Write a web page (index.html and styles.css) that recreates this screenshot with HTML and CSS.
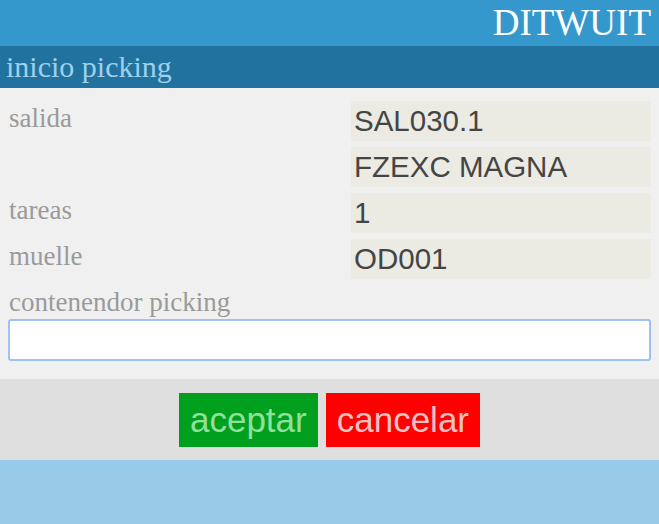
FILE: index.html
```html
<!DOCTYPE html>
<html lang="es">
<head>
<meta charset="utf-8">
<title>DITWUIT - inicio picking</title>
<link rel="stylesheet" href="styles.css">
</head>
<body>
<header class="topbar">DITWUIT</header>
<div class="subbar">inicio picking</div>
<main class="form">
  <div class="fields">
    <div class="label">salida</div>
    <div class="value">SAL030.1</div>
    <div class="label"></div>
    <div class="value">FZEXC MAGNA</div>
    <div class="label">tareas</div>
    <div class="value">1</div>
    <div class="label">muelle</div>
    <div class="value">OD001</div>
  </div>
  <label class="label block" for="cont">contenendor picking</label>
  <input id="cont" class="text-input" type="text" autofocus>
</main>
<div class="actions">
  <button class="btn btn-ok" type="button">aceptar</button>
  <button class="btn btn-cancel" type="button">cancelar</button>
</div>
<div class="footer"></div>
</body>
</html>
```
FILE: styles.css
```css
html, body {
  margin: 0;
  padding: 0;
}
body {
  background: #98cbe7;
  font-family: "Liberation Serif", "Times New Roman", serif;
  min-height: 524px;
}
.topbar {
  height: 46px;
  line-height: 45px;
  background: #3498cc;
  color: #ffffff;
  font-size: 37px;
  text-align: right;
  padding-right: 8px;
  box-sizing: border-box;
}
.subbar {
  height: 42px;
  line-height: 42px;
  background: #21729f;
  color: #9fd0ec;
  font-size: 30px;
  padding-left: 6px;
}
.form {
  background: #f0f0f0;
  padding: 13px 8px 18px 8px;
}
.fields {
  display: grid;
  grid-template-columns: 1fr 300px;
  grid-auto-rows: 40px;
  row-gap: 6px;
}
.label {
  color: #9a9a9a;
  font-size: 27px;
  line-height: 34px;
  padding-left: 1px;
}
.label.block {
  display: block;
  margin-top: 6px;
}
.value {
  background: #ebeae3;
  color: #454545;
  font-family: "Liberation Sans", Arial, sans-serif;
  font-size: 29.5px;
  line-height: 40px;
  padding-left: 3px;
}
.text-input {
  display: block;
  width: 100%;
  height: 42px;
  box-sizing: border-box;
  margin: 0;
  border: 2px solid #9fc2f6;
  border-radius: 3px;
  background: #ffffff;
  font-family: "Liberation Sans", Arial, sans-serif;
  font-size: 29px;
  padding: 0 2px;
  color: #000;
  caret-color: #000;
  outline: none;
}
.actions {
  background: #dfdfdf;
  height: 81px;
  display: flex;
  justify-content: center;
  align-items: flex-start;
  gap: 8px;
  padding-top: 14px;
  box-sizing: border-box;
}
.btn {
  border: none;
  margin: 0;
  height: 54px;
  padding: 0 11px;
  font-family: "Liberation Sans", Arial, sans-serif;
  font-size: 35px;
  line-height: 54px;
  cursor: pointer;
}
.btn-ok {
  background: #00a01e;
  color: #90e09c;
}
.btn-cancel {
  background: #ff0000;
  color: #f0c0c2;
}
.footer {
  height: 64px;
  background: #98cbe7;
}
```
